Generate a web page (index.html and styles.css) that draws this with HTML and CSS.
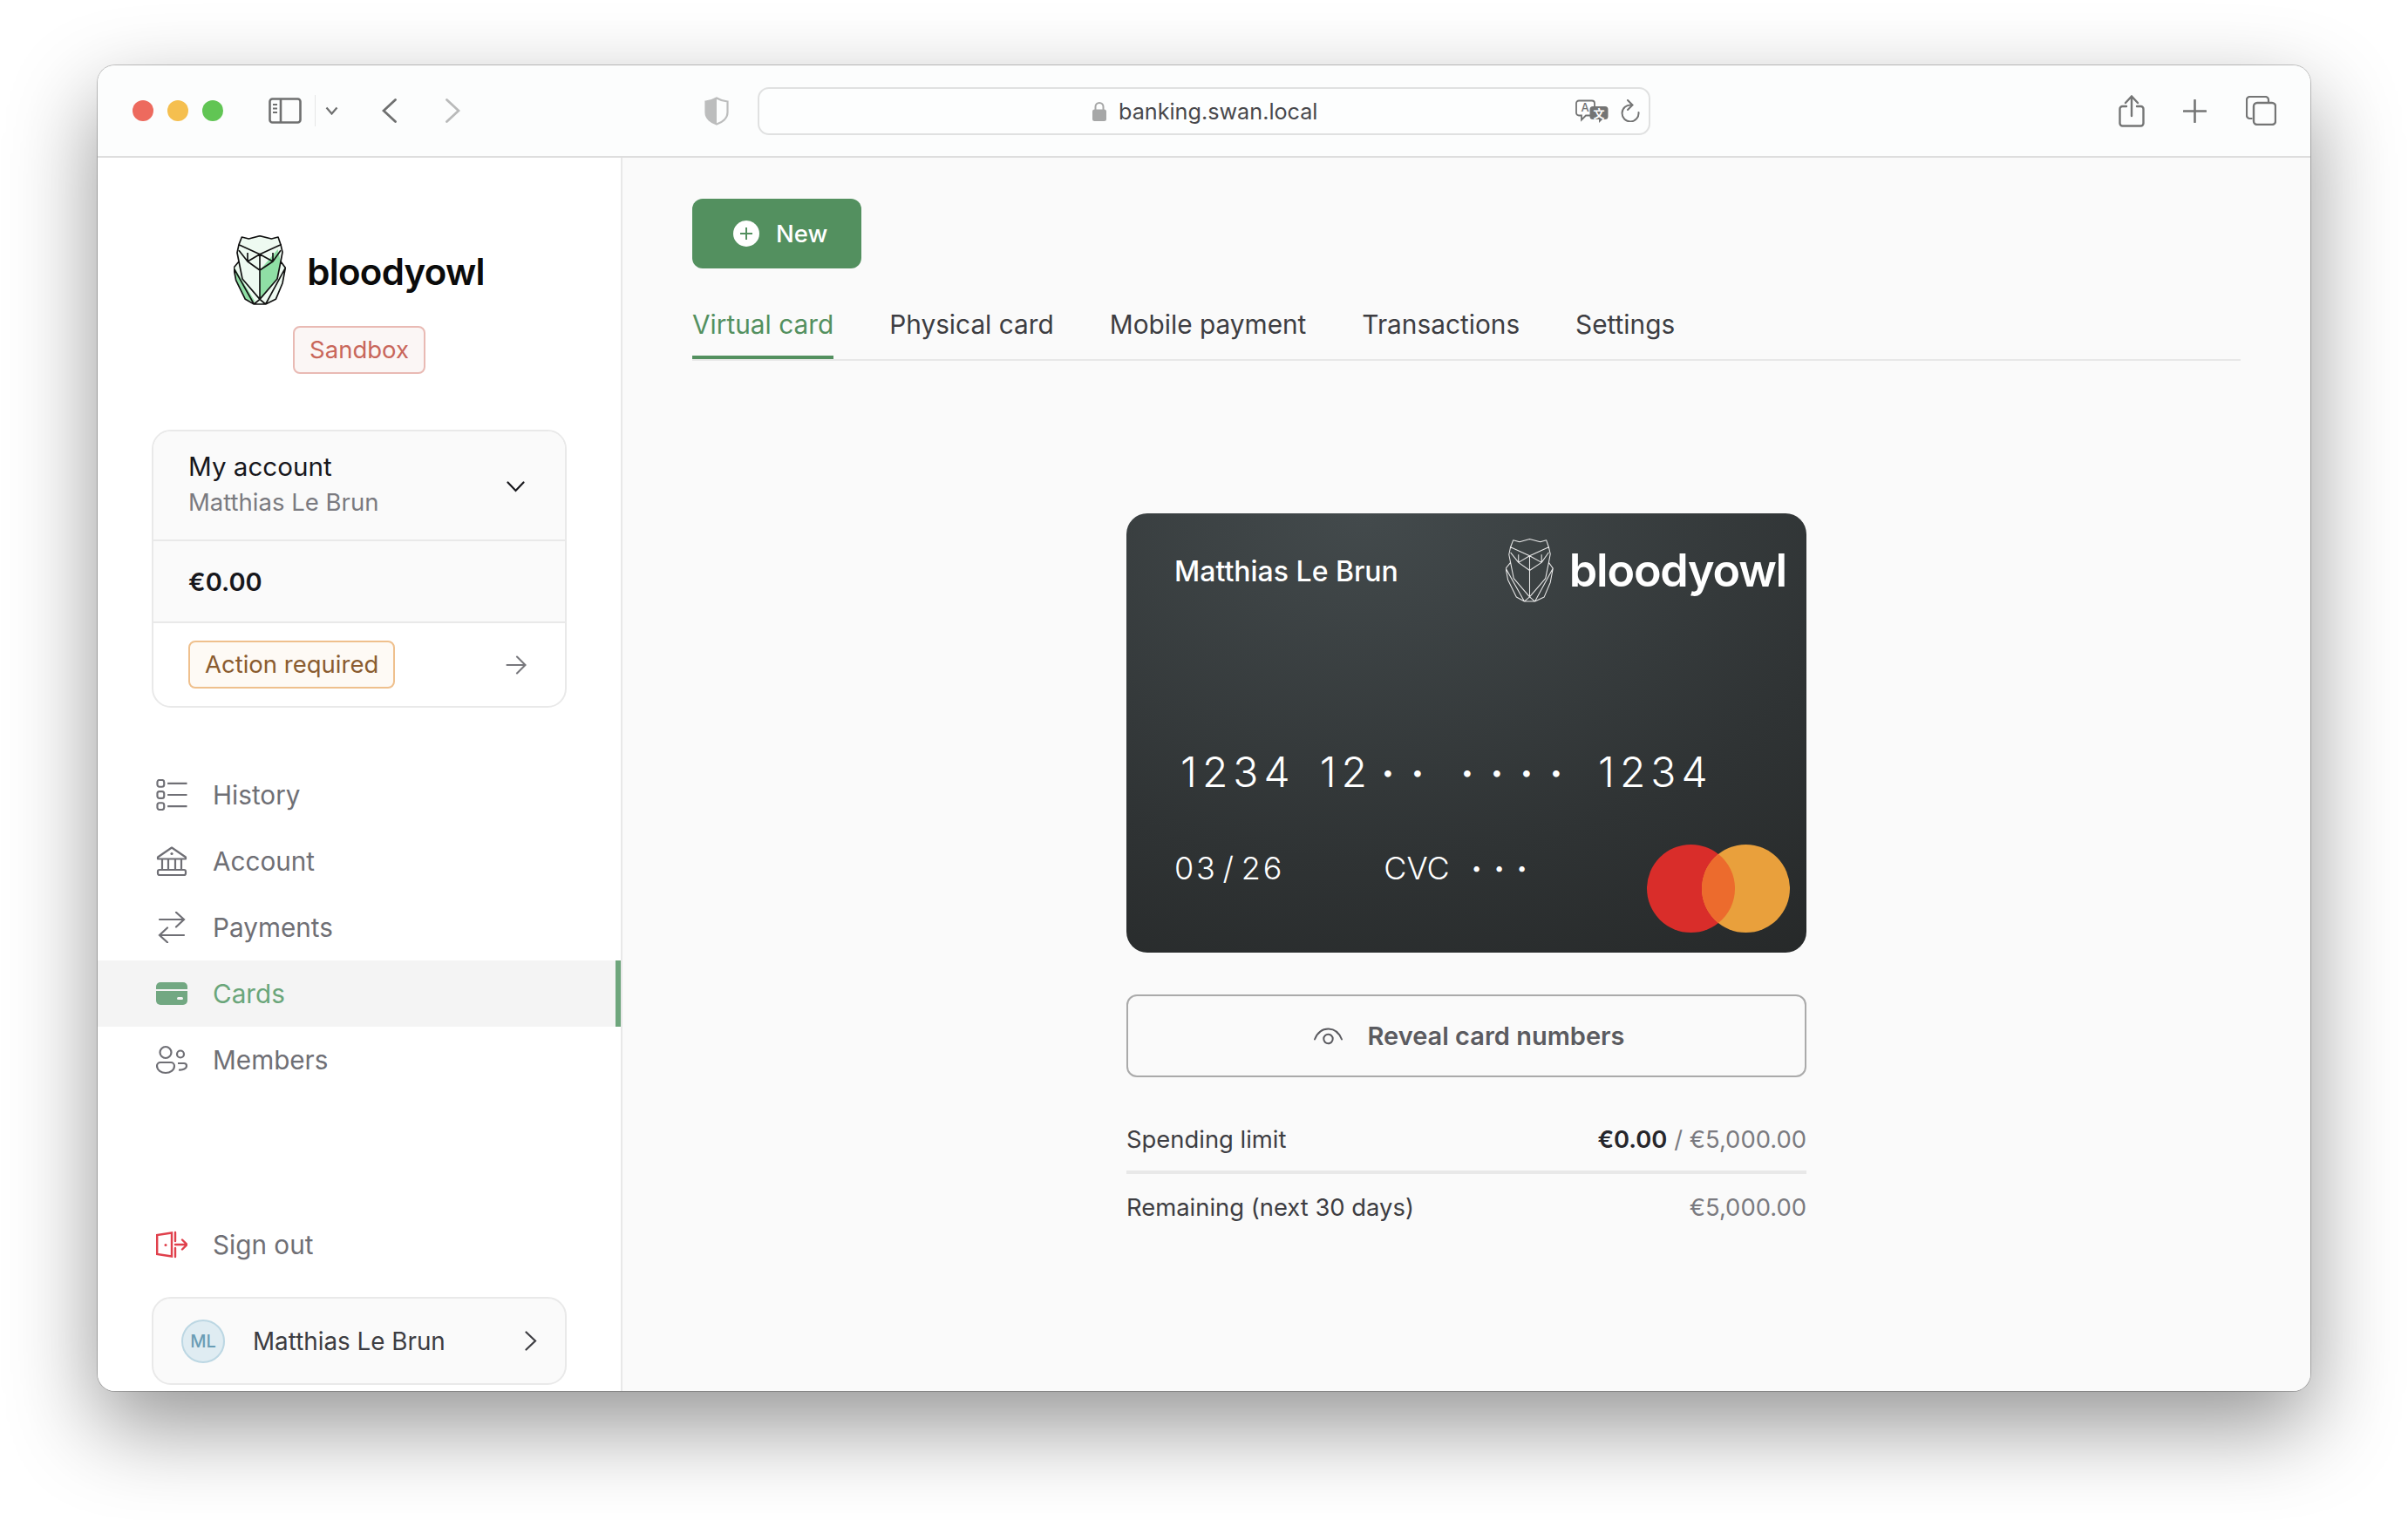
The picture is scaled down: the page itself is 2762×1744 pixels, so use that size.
FILE: index.html
```html
<!DOCTYPE html>
<html lang="en">
<head>
<meta charset="utf-8">
<title>bloodyowl - Cards</title>
<link rel="stylesheet" href="styles.css">
</head>
<body>
<div class="window">
  <header class="titlebar">
    <div class="lights"><i class="light red"></i><i class="light yellow"></i><i class="light green"></i></div>
    <svg class="ti ti-sidebar" viewBox="0 0 38 30"><rect x="1.5" y="1.5" width="35" height="27" rx="3" fill="none" stroke="#6f7070" stroke-width="2.6"/><path d="M14 1.5v27" stroke="#6f7070" stroke-width="2.6"/><path d="M5 8h5M5 12.500h5M5 17h5" stroke="#6f7070" stroke-width="2"/></svg>
    <span class="ti-divider"></span>
    <svg class="ti ti-drop" viewBox="0 0 15 10"><path d="M1.500 1.500 7.500 8.500 13.500 1.500" fill="none" stroke="#6f7070" stroke-width="2.200"/></svg>
    <svg class="ti ti-back" viewBox="0 0 17 28"><path d="M15.500 1.500 2 14 15.500 26.500" fill="none" stroke="#6f7070" stroke-width="2.800" stroke-linecap="round"/></svg>
    <svg class="ti ti-forward" viewBox="0 0 17 28"><path d="M1.500 1.500 15 14 1.500 26.500" fill="none" stroke="#b9baba" stroke-width="2.800" stroke-linecap="round"/></svg>
    <svg class="ti ti-shield" viewBox="0 0 28 33"><path d="M14 1.500 C18 4 22 5 26.500 5.500 V18 C26.500 25 20 29.500 14 31.500 C8 29.500 1.500 25 1.500 18 V5.500 C6 5 10 4 14 1.500Z" fill="none" stroke="#bcbdbd" stroke-width="2.200"/><path d="M14 1.500 C10 4 6 5 1.500 5.500 V18 C1.500 25 8 29.500 14 31.500Z" fill="#bcbdbd"/></svg>
    <div class="urlbar">
      <div class="url-center">
        <svg class="lock" viewBox="0 0 16 23"><path d="M3.500 11V6.500a4.500 4.500 0 0 1 9 0V11" fill="none" stroke="#a6a7a7" stroke-width="2"/><rect y="9.500" width="16" height="13.500" rx="2.500" fill="#a6a7a7"/></svg>
        <span class="url-text">banking.swan.local</span>
      </div>
      <svg class="ti ti-translate" viewBox="0 0 38 27">
        <path d="M4 1.500h15a3 3 0 0 1 3 3v11a3 3 0 0 1-3 3h-7l-5 5v-5h-3a3 3 0 0 1-3-3v-11a3 3 0 0 1 3-3z" fill="#fff" stroke="#737474" stroke-width="1.800"/>
        <text x="11" y="13.500" class="tr-a">A</text>
        <path d="M20 8h14a3.500 3.500 0 0 1 3.500 3.500v8a3.500 3.500 0 0 1-3.500 3.500h-3l-4 4v-4h-7a3.500 3.500 0 0 1-3.500-3.500v-8A3.500 3.500 0 0 1 20 8z" fill="#737474"/>
        <text x="27" y="20.500" class="tr-b">文</text>
      </svg>
      <svg class="ti ti-reload" viewBox="0 0 22 26"><path d="M12 6.500A9.500 9.500 0 1 0 20.500 15" fill="none" stroke="#737474" stroke-width="2" stroke-linecap="round"/><path d="M8 1 13.500 6.500 8 12" fill="none" stroke="#737474" stroke-width="2" stroke-linecap="round"/></svg>
    </div>
    <svg class="ti ti-share" viewBox="0 0 30 37"><path d="M9 13H4.500A3 3 0 0 0 1.500 16V32.500a3 3 0 0 0 3 3H25.500a3 3 0 0 0 3-3V16a3 3 0 0 0-3-3H21M15 24V2M8 9 15 1.500 22 9" fill="none" stroke="#747575" stroke-width="2.400" stroke-linecap="round"/></svg>
    <svg class="ti ti-plus" viewBox="0 0 27 27"><path d="M13.500 1v25M1 13.500h25" stroke="#747575" stroke-width="2.600" stroke-linecap="round"/></svg>
    <svg class="ti ti-tabs" viewBox="0 0 35 34"><path d="M7.500 26H4.500a3.500 3.500 0 0 1-3.500-3.500V4.500A3.500 3.500 0 0 1 4.500 1H22.500a3.500 3.500 0 0 1 3.500 3.500V8" fill="none" stroke="#747575" stroke-width="2.200"/><rect x="9" y="8" width="25" height="25" rx="4" fill="none" stroke="#747575" stroke-width="2.400"/></svg>
  </header>

  <div class="app">
    <aside class="sidebar">
      <div class="brand">
        <svg class="owl" viewBox="60 60 180 240">
          <path d="M78 92 88 66 112 72 150 62 190 72 213 66 222 92 228 118 222 150 238 172 228 225 205 280 170 297H130L100 280 68 215 60 172 78 150 72 120Z" fill="#eefaf1"/>
          <path d="M150 180 212 108 222 150 210 210 150 280ZM62 170 135 290 100 280 68 215Z" fill="#8fdfa5"/>
          <path d="M78 92 88 66 112 72 150 62 190 72 213 66 222 92 150 125ZM78 92 72 120 78 150 60 172 68 215 100 280 130 297H170L205 280 228 225 238 172 222 150 228 118 222 92M150 125V280L130 297M150 280 170 297M78 150 90 210 150 280 210 210 222 150M150 125 108 150 150 180 195 150ZM78 112 108 150M222 112 195 150M108 120 108 150M195 120 195 150M60 172 130 297M238 172 170 297" fill="none" stroke="#111" stroke-width="5" stroke-linejoin="round"/>
        </svg>
        <span class="brand-name">bloodyowl</span>
      </div>
      <div class="sandbox-wrap"><span class="tag tag-sandbox">Sandbox</span></div>

      <div class="account">
        <div class="account-head">
          <div class="account-names">
            <div class="account-title">My account</div>
            <div class="account-sub">Matthias Le Brun</div>
          </div>
          <svg class="acc-chevron" viewBox="0 0 21 13"><path d="M1.500 1.500 10.500 11 19.500 1.500" fill="none" stroke="#17171c" stroke-width="2.200" stroke-linecap="round"/></svg>
        </div>
        <div class="account-balance">€0.00</div>
        <div class="account-action">
          <span class="tag tag-action">Action required</span>
          <svg class="acc-arrow" viewBox="0 0 24 22"><path d="M1.500 11H22.500M13 1.500 22.500 11 13 20.500" fill="none" stroke="#77777c" stroke-width="2.100" stroke-linecap="round"/></svg>
        </div>
      </div>

      <nav class="nav">
        <a class="nav-item">
          <svg class="nav-icon" viewBox="0 0 36 37"><g fill="none" stroke="#6f6f75" stroke-width="2.200"><rect x="1" y="1" width="8" height="8" rx="2.500"/><rect x="1" y="14.500" width="8" height="8" rx="2.500"/><rect x="1" y="28" width="8" height="8" rx="2.500"/><path d="M13 5H36M13 18.500H36M13 32H36"/></g></svg>
          <span>History</span>
        </a>
        <a class="nav-item">
          <svg class="nav-icon" viewBox="0 0 36 34"><g fill="none" stroke="#6f6f75" stroke-width="2.200" stroke-linejoin="round"><path d="M18 1.500 34 12.500V14.500H2V12.500Z"/><path d="M7 15V27M14 15V27M22 15V27M29 15V27"/><rect x="2" y="27" width="32" height="6" rx="2"/></g><circle cx="18" cy="8.500" r="1.600" fill="#6f6f75"/></svg>
          <span>Account</span>
        </a>
        <a class="nav-item">
          <svg class="nav-icon" viewBox="0 0 36 36"><path d="M4 9H32M23 0.800 32 9 23 17.500M32 27H4M13 18.500 4 27 13 35.200" fill="none" stroke="#6f6f75" stroke-width="2.200" stroke-linecap="round"/></svg>
          <span>Payments</span>
        </a>
        <a class="nav-item nav-item-active">
          <svg class="nav-icon" viewBox="0 0 36 26"><rect width="36" height="26" rx="5" fill="#72a882"/><rect y="8" width="36" height="2" fill="#f4f4f4"/><rect x="24" y="17" width="7" height="3" rx="1.500" fill="#f4f4f4"/></svg>
          <span>Cards</span>
        </a>
        <a class="nav-item">
          <svg class="nav-icon" viewBox="0 0 36 32"><g fill="none" stroke="#6f6f75" stroke-width="2.200"><circle cx="11" cy="7.500" r="6.500"/><circle cx="28" cy="9.500" r="4"/><path d="M5 19H17A4 4 0 0 1 21 23C21 28 16 31 11 31S1 28 1 23A4 4 0 0 1 5 19Z"/><path d="M25 20H32A3 3 0 0 1 35 23C35 26 31 28 26 27.500"/></g></svg>
          <span>Members</span>
        </a>
      </nav>

      <a class="nav-item signout">
        <svg class="nav-icon" viewBox="0 0 36 30"><g fill="none" stroke="#e0404c" stroke-width="2.400" stroke-linecap="round"><path d="M18 1.500 1.200 4V26L18 28.500Z"/><path d="M22 1V11M22 19V29M22 15H35M30 9.500 35.500 15 30 20.500"/></g><circle cx="11" cy="15.500" r="1.500" fill="#e0404c"/></svg>
        <span>Sign out</span>
      </a>

      <div class="user">
        <span class="avatar">ML</span>
        <span class="user-name">Matthias Le Brun</span>
        <svg class="user-chevron" viewBox="0 0 14 23"><path d="M1.500 1.500 12 11.500 1.500 21.500" fill="none" stroke="#3d3d42" stroke-width="2.200" stroke-linecap="round"/></svg>
      </div>
    </aside>

    <main class="main">
      <button class="btn-new">
        <svg class="btn-new-icon" viewBox="0 0 30 30"><circle cx="15" cy="15" r="15" fill="#fff"/><path d="M15 8V22M8 15H22" stroke="#53905f" stroke-width="2"/></svg>
        <span>New</span>
      </button>

      <div class="tabs">
        <a class="tab tab-active">Virtual card</a>
        <a class="tab">Physical card</a>
        <a class="tab">Mobile payment</a>
        <a class="tab">Transactions</a>
        <a class="tab">Settings</a>
      </div>

      <section class="panel">
        <div class="card">
          <div class="card-top">
            <span class="card-holder">Matthias Le Brun</span>
            <svg class="card-owl" viewBox="60 60 180 240">
              <path d="M78 92 88 66 112 72 150 62 190 72 213 66 222 92 150 125ZM78 92 72 120 78 150 60 172 68 215 100 280 130 297H170L205 280 228 225 238 172 222 150 228 118 222 92M150 125V280L130 297M150 280 170 297M78 150 90 210 150 280 210 210 222 150M150 125 108 150 150 180 195 150ZM78 112 108 150M222 112 195 150M108 120 108 150M195 120 195 150M60 172 130 297M238 172 170 297" fill="none" stroke="#e8e8e8" stroke-width="3.500" stroke-linejoin="round"/>
            </svg>
            <span class="card-brand">bloodyowl</span>
          </div>
          <div class="card-number">
            <span class="num-group">1234</span>
            <span class="num-group num-mixed">12<i>•</i><i>•</i></span>
            <span class="num-group num-dots"><i>•</i><i>•</i><i>•</i><i>•</i></span>
            <span class="num-group">1234</span>
          </div>
          <div class="card-bottom">
            <span class="card-exp">03 / 26</span>
            <span class="card-cvc">CVC</span>
            <span class="cvc-dots"><i>•</i><i>•</i><i>•</i></span>
            <svg class="mc" viewBox="0 0 164 101"><circle cx="50.500" cy="50.500" r="50.500" fill="#d92d2a"/><circle cx="113.500" cy="50.500" r="50.500" fill="#e9a03c"/><path d="M82 11A50.500 50.500 0 0 1 82 90 50.500 50.500 0 0 1 82 11Z" fill="#ec6b2d"/></svg>
          </div>
        </div>

        <button class="btn-reveal">
          <svg class="eye" viewBox="0 0 33 20"><path d="M1 13.500C4 6 9.500 1.500 16.500 1.500S29 6 32 13.500" fill="none" stroke="#5b5b60" stroke-width="2" stroke-linecap="round"/><circle cx="16.500" cy="13" r="5.200" fill="none" stroke="#5b5b60" stroke-width="2"/></svg>
          <span>Reveal card numbers</span>
        </button>

        <div class="limit-row limit-first">
          <span>Spending limit</span>
          <span class="limit-value"><b>€0.00</b> <em>/</em> €5,000.00</span>
        </div>
        <div class="limit-bar"></div>
        <div class="limit-row">
          <span>Remaining (next 30 days)</span>
          <span class="limit-value">€5,000.00</span>
        </div>
      </section>
    </main>
  </div>
</div>
</body>
</html>
```

FILE: styles.css
```css
* { box-sizing: border-box; }
html, body { margin: 0; height: 100%; }
body {
  background: #fff;
  padding: 75px 112px 0;
  overflow: hidden;
  font-family: Inter, "Noto Sans", sans-serif;
  font-size: 28px;
  color: #3d3d42;
}
.window {
  width: 2538px;
  height: 1521px;
  border-radius: 20px;
  display: flex;
  flex-direction: column;
  overflow: hidden;
  background: #fafafa;
  box-shadow: 0 0 0 1px rgba(0,0,0,.22), 0 40px 100px rgba(0,0,0,.42);
}

/* title bar */
.titlebar {
  flex: 0 0 106px;
  display: flex;
  align-items: center;
  padding: 0 0 0 40px;
  background: #fcfdfd;
  border-bottom: 2px solid #dedede;
}
.lights { display: flex; gap: 16px; }
.light { width: 24px; height: 24px; border-radius: 50%; display: block; }
.red { background: #ed6a5e; }
.yellow { background: #f5bf4f; }
.green { background: #61c554; }
.ti { display: block; flex: none; }
.ti-sidebar { width: 38px; height: 30px; margin-left: 52px; }
.ti-divider { width: 1px; height: 36px; background: #e6e7e7; margin-left: 15px; }
.ti-drop { width: 15px; height: 10px; margin-left: 11px; }
.ti-back { width: 17px; height: 28px; margin-left: 50px; }
.ti-forward { width: 17px; height: 28px; margin-left: 56px; }
.ti-shield { width: 28px; height: 33px; margin-left: 280px; }
.urlbar {
  width: 1024px;
  height: 55px;
  margin-left: 33px;
  border: 2px solid #e0e1e1;
  border-radius: 13px;
  background: #fdfefe;
  display: flex;
  align-items: center;
  position: relative;
}
.url-center {
  position: absolute;
  left: 382px;
  top: 0;
  bottom: 0;
  display: flex;
  align-items: center;
  gap: 14px;
}
.lock { width: 16px; height: 23px; display: block; }
.url-text { font-size: 25.2px; color: #48484c; padding-top: 2px; }
.ti-translate { width: 38px; height: 27px; margin-left: 936px; }
.tr-a { font: 500 13px Inter, sans-serif; fill: #737474; text-anchor: middle; }
.tr-b { font: 700 13px "Noto Sans CJK SC", sans-serif; fill: #fff; text-anchor: middle; }
.ti-reload { width: 22px; height: 26px; margin-left: 14px; }
.ti-share { width: 30px; height: 37px; margin-left: 537px; }
.ti-plus { width: 27px; height: 27px; margin-left: 44px; }
.ti-tabs { width: 35px; height: 34px; margin-left: 45px; }

/* shell */
.app { flex: 1; display: flex; min-height: 0; }
.sidebar {
  width: 602px;
  flex: none;
  background: #fff;
  border-right: 2px solid #e8e8e8;
  display: flex;
  flex-direction: column;
  padding-top: 89px;
  padding-bottom: 7px;
}
.brand { display: flex; align-items: center; justify-content: center; gap: 24px; height: 80px; }
.owl { width: 60px; height: 80px; display: block; }
.brand-name { font-size: 42px; font-weight: 600; color: #0b0b0b; letter-spacing: -0.7px; line-height: 1; position: relative; top: 2px; }
.sandbox-wrap { display: flex; justify-content: center; margin-top: 24px; }
.tag {
  display: inline-flex;
  align-items: center;
  height: 55px;
  border-radius: 8px;
  border: 2px solid;
  padding: 0 17px;
  line-height: 1;
  font-size: 27.5px;
}
.tag-sandbox { background: #fbf6f5; border-color: #e9bab4; color: #c9665a; }
.tag-action { background: #fefaf5; border-color: #efc08d; color: #8a5c30; }

.account {
  margin: 64px 62px 0;
  border: 2px solid #e9e9e9;
  border-radius: 22px;
  overflow: hidden;
  background: #fff;
}
.account-head {
  height: 126px;
  background: #fafafa;
  border-bottom: 2px solid #e9e9e9;
  display: flex;
  align-items: center;
  justify-content: space-between;
  padding: 0 46px 0 40px;
}
.account-names { line-height: 41px; margin-top: -2px; }
.account-title { color: #17171c; font-size: 29.6px; }
.account-sub { color: #7a7a80; font-size: 27.5px; }
.acc-chevron { width: 21px; height: 13px; display: block; margin-top: 3px; }
.account-balance {
  height: 94px;
  background: #fafafa;
  border-bottom: 2px solid #e9e9e9;
  display: flex;
  align-items: center;
  padding-left: 40px;
  color: #17171c;
  font-weight: 600;
  font-size: 29px;
}
.account-action {
  height: 95px;
  display: flex;
  align-items: center;
  justify-content: space-between;
  padding: 0 44px 0 40px;
}
.acc-arrow { width: 24px; height: 22px; display: block; }

.nav { margin-top: 62px; display: flex; flex-direction: column; }
.nav-item {
  height: 76px;
  flex: none;
  display: flex;
  align-items: center;
  padding-left: 67px;
  color: #6f6f75;
  gap: 29px;
  font-size: 29.7px;
  position: relative;
}
.nav-icon { width: 36px; height: 36px; display: block; flex: none; }
.nav-item-active { background: #f4f4f4; color: #6aa67a; }
.nav-item-active::after {
  content: "";
  position: absolute;
  right: 0;
  top: 0;
  bottom: 0;
  width: 6px;
  background: #6ea67c;
}
.signout { margin-top: auto; }
.user {
  margin: 22px 62px 0;
  height: 101px;
  flex: none;
  border: 2px solid #e9e9e9;
  border-radius: 22px;
  background: #fafafa;
  display: flex;
  align-items: center;
  padding: 0 32px;
}
.avatar {
  width: 50px;
  height: 50px;
  border-radius: 50%;
  background: #dfecf2;
  border: 2px solid #bcd7e3;
  color: #6a9db5;
  font-size: 20px;
  font-weight: 500;
  display: flex;
  align-items: center;
  justify-content: center;
  flex: none;
}
.user-name { margin-left: 32px; flex: 1; color: #3d3d42; font-size: 27.8px; padding-top: 1px; }
.user-chevron { width: 14px; height: 23px; display: block; }

/* main */
.main { flex: 1; min-width: 0; padding: 47px 80px 0; background: #fafafa; }
.btn-new {
  width: 194px;
  height: 80px;
  border: 0;
  border-radius: 12px;
  background: #53905f;
  color: #fff;
  font: 500 27.5px Inter, sans-serif;
  display: flex;
  align-items: center;
  padding: 0 0 0 47px;
  gap: 19px;
}
.btn-new-icon { width: 30px; height: 30px; display: block; }
.tabs {
  margin-top: 20px;
  height: 86px;
  display: flex;
  gap: 64px;
  border-bottom: 2px solid #e8e8e8;
}
.tab { display: flex; align-items: center; height: 84px; padding-top: 4px; color: #3d3d42; font-size: 29.8px; }
.tab-active { color: #53905f; box-shadow: inset 0 -4px 0 #53905f; }

.panel { width: 780px; margin: 175px auto 0; }
.card {
  height: 504px;
  border-radius: 24px;
  padding: 0 23px 0 55px;
  display: flex;
  flex-direction: column;
  color: #fff;
  background: radial-gradient(ellipse 1050px 720px at 35% 0%, #434a4c 0%, #2f3334 55%, #222424 100%);
}
.card-top { display: flex; align-items: flex-start; height: 102px; padding-top: 29px; }
.card-holder { font-size: 32px; font-weight: 500; margin-top: 18px; flex: 1; line-height: 40px; }
.card-owl { width: 55px; height: 73px; display: block; flex: none; }
.card-brand { font-size: 52px; font-weight: 600; letter-spacing: -1.2px; margin-left: 18px; line-height: 1; margin-top: 11px; }
.card-number {
  margin-top: 171px;
  margin-left: 7px;
  height: 48px;
  display: flex;
  align-items: center;
  font-size: 48px;
  font-weight: 300;
  letter-spacing: 6px;
  line-height: 1;
}
.num-group { display: flex; align-items: center; }
.num-group i { font-style: normal; font-size: 28px; width: 34px; text-align: center; letter-spacing: 0; }
.num-mixed { margin-left: 28px; }
.num-mixed i:first-of-type { margin-left: 1px; }
.num-dots { margin-left: 23px; }
.num-group:last-child { margin-left: 31px; }
.card-bottom { display: flex; align-items: flex-start; margin-top: 59px; position: relative; }
.card-exp { font-size: 36px; font-weight: 300; letter-spacing: 2.8px; word-spacing: -7px; line-height: 44px; margin-top: 5px; white-space: pre; }
.card-cvc { font-size: 36px; font-weight: 300; line-height: 44px; margin-top: 5px; margin-left: 114px; }
.cvc-dots { display: flex; margin-left: 18px; margin-top: 5px; line-height: 44px; font-size: 20px; }
.cvc-dots i { font-style: normal; width: 26px; text-align: center; }
.mc { width: 164px; height: 101px; display: block; position: absolute; right: -4px; top: 0; }

.btn-reveal {
  margin-top: 48px;
  width: 780px;
  height: 95px;
  background: transparent;
  border: 2px solid #aaa;
  border-radius: 12px;
  padding: 0 0 0 7px;
  display: flex;
  align-items: center;
  justify-content: center;
  gap: 28px;
  font: 600 29px Inter, sans-serif;
  color: #5b5b60;
}
.eye { width: 33px; height: 20px; display: block; }
.limit-row { display: flex; justify-content: space-between; align-items: center; height: 40px; color: #3d3d42; font-size: 27.4px; }
.limit-first { margin-top: 51px; }
.limit-value { color: #7a7a80; }
.limit-value b { color: #26262b; font-weight: 600; }
.limit-value em { font-style: normal; }
.limit-bar { height: 4px; background: #e8e8e8; margin: 16px 0 18px; }
```
